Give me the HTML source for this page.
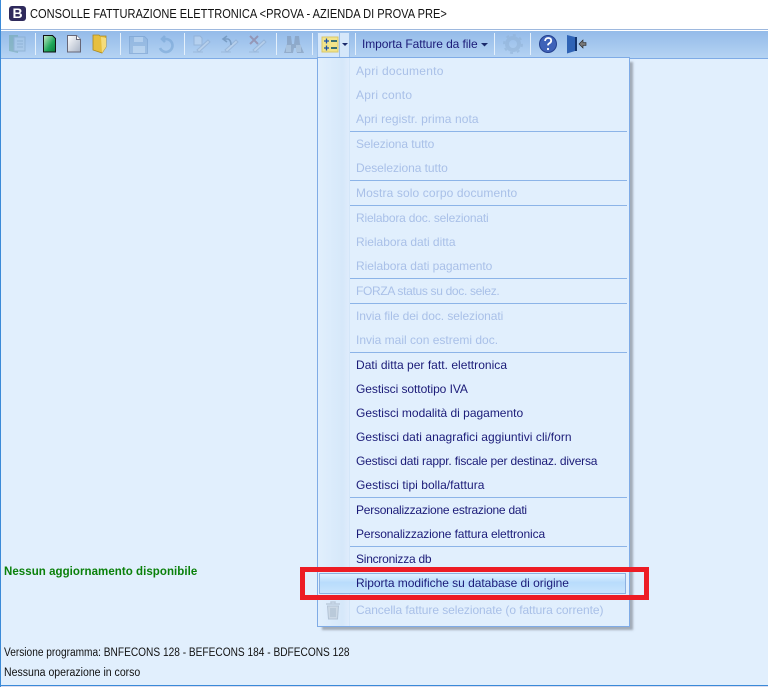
<!DOCTYPE html>
<html><head><meta charset="utf-8"><style>
html,body{margin:0;padding:0;width:768px;height:687px;overflow:hidden;background:#fff}
body{position:relative;font-family:"Liberation Sans",sans-serif;font-size:12px}
div,span{position:absolute;white-space:nowrap}
.t{left:356px;line-height:16px;height:16px;color:#1b1b78}
.d{color:#a9c0e8}
.s{left:350px;width:277px;height:1px;background:#8cb4e8}
.v{top:33px;width:1px;height:22px;background:#e4f0fb}
</style></head><body>
<div style="left:0;top:0;width:1px;height:687px;background:#3a8ad8;z-index:9"></div>
<div style="left:9px;top:6px;width:17px;height:15px;background:#2f2a5c;border-radius:3px;color:#fff;font-weight:bold;font-size:14px;line-height:15px;text-align:center">B</div>
<div style="left:30px;top:6px;line-height:16px;color:#111;font-size:12.5px;transform:scaleX(.885);transform-origin:0 0">CONSOLLE FATTURAZIONE ELETTRONICA &lt;PROVA - AZIENDA DI PROVA PRE&gt;</div>
<div style="left:0;top:29px;width:768px;height:1px;background:#9db8de"></div>
<div style="left:0;top:31px;width:768px;height:27px;background:linear-gradient(#94bbe9,#b5d3f3)"></div>
<div style="left:0;top:58px;width:768px;height:1px;background:#7fabe6"></div>
<div style="left:0;top:59px;width:768px;height:626px;background:#e1effd"></div>
<div style="left:0;top:685px;width:768px;height:1px;background:#3a8ad8"></div>
<div style="left:0;top:686px;width:768px;height:1px;background:#dde"></div>

<div class="v" style="left:35px"></div><div class="v" style="left:120px"></div><div class="v" style="left:184px"></div><div class="v" style="left:276px"></div><div class="v" style="left:312px"></div><div class="v" style="left:355px"></div><div class="v" style="left:494px"></div><div class="v" style="left:530px"></div>

<svg style="position:absolute;left:0;top:28px" width="610" height="32" viewBox="0 28 610 32">
<g opacity=".55">
<path d="M9 35h9v18l-9-2z" fill="#6fa7a8"/><path d="M14 37h11v14H14z" fill="#a9c9e6" stroke="#7fa3c4"/><path d="M17 41h6M17 44h6M17 47h6" stroke="#7fa3c4"/>
</g>
<path d="M43.500 35.500h9l3 3v13.500h-12z" fill="url(#g)" stroke="#111"/>
<path d="M67.500 35.500h9l4 4v12.500h-13z" fill="url(#w)" stroke="#667"/><path d="M76.500 35.500v4h4" fill="#fff" stroke="#667"/>
<path d="M93 35h6l1 1h6v11l-4 6-9-3z" fill="#e7bf3e" stroke="#a98820" stroke-width=".8"/><path d="M101 37l5 1v9l-4 6z" fill="#f5dc7c"/>
<g opacity=".5">
<path d="M129.500 36.500h15l3 3v14h-18z" fill="#8cb0d8" stroke="#6f97c7"/><path d="M134 37h9v5h-9zM133 46h12v7h-12z" fill="#c3d9ef"/>
<path d="M165 36l-3 3 3 3M163 39h3a6.500 6.500 0 1 1-6 9" fill="none" stroke="#6f9fd0" stroke-width="2.600"/>
<path d="M193 52h10M197 50l11-10 2 2-11 10z" fill="#c9d8ea" stroke="#8ba6c8"/>
<path d="M194 36h6l2 2v7h-8z" fill="#c9dcf1" stroke="#8ba6c8"/>
<path d="M221 52h10M225 50l11-10 2 2-11 10z" fill="#c9d8ea" stroke="#8ba6c8"/>
<path d="M227 36l-4 3 4 3M223 39h5q3 1 3 6" fill="none" stroke="#55799f" stroke-width="1.600"/>
<path d="M249 52h10M253 50l11-10 2 2-11 10z" fill="#c9d8ea" stroke="#8ba6c8"/>
<path d="M250 36l8 8M258 36l-8 8" stroke="#8a6a80" stroke-width="2"/>
<path d="M287 36h4l1 8h2l1-8h4l1 8 4 9h-7l-1-5h-2l-1 5h-9l3-9z" fill="#7a8ea8"/><path d="M286 45h5v7h-5zM296 45h5v7h-5z" fill="#a9bccf"/>
<circle cx="513" cy="44" r="6" fill="none" stroke="#8fb0d4" stroke-width="4"/><circle cx="513" cy="44" r="9" fill="none" stroke="#8fb0d4" stroke-width="2" stroke-dasharray="3 4"/>
</g>
<rect x="317.500" y="32.500" width="32" height="26" fill="#d5e7fa" stroke="#9cc0ea"/>
<path d="M339.500 32v26" stroke="#9cc0ea"/>
<rect x="322" y="37" width="16" height="15" fill="#f2e48a" stroke="#d9c76a"/>
<path d="M324 41h5M326.500 38.500v5M324 48h5M326.500 45.500v5" stroke="#1a4fa8" stroke-width="1.300"/><path d="M331 41h6M331 48h6" stroke="#1f5f70" stroke-width="1.800"/>
<path d="M342 43h6l-3 3z" fill="#1b2a6b"/>
<path d="M481 43h7l-3.500 3.500z" fill="#1b2a6b"/>
<circle cx="548" cy="44" r="8.500" fill="#3f62b8" stroke="#24418f"/>
<path d="M545 41q.5-3 3.200-3 3 0 3 2.600 0 1.800-2 2.800-1.200.7-1.200 2" fill="none" stroke="#fff" stroke-width="1.800"/><circle cx="548" cy="49" r="1.100" fill="#fff"/>
<path d="M567 35l8 2v14l-8 2.500z" fill="#2f63b5"/><path d="M575 37h2v14h-2z" fill="#13356f"/>
<path d="M579 44l4-4v2.500h3v3h-3V48z" fill="#777" stroke="#222" stroke-width=".6"/>
<defs>
<linearGradient id="g" x1="0" y1="0" x2="1" y2="1"><stop offset="0" stop-color="#c9ecc9"/><stop offset=".6" stop-color="#1ea65a"/><stop offset="1" stop-color="#0c7a3c"/></linearGradient>
<linearGradient id="w" x1="0" y1="0" x2="1" y2="1"><stop offset="0" stop-color="#fff"/><stop offset="1" stop-color="#a9b4c6"/></linearGradient>
</defs>
</svg>
<div style="left:362px;top:36px;line-height:16px;color:#1b1b78;letter-spacing:-.08px">Importa Fatture da file</div>

<div style="left:317px;top:57px;width:311px;height:568px;background:#e1effd;border:1px solid #7fabe6;box-shadow:4px 4px 2px -1px rgba(110,115,125,.55)"></div>
<div style="left:318px;top:58px;width:31px;height:568px;background:linear-gradient(90deg,#e1effd,#d6e8fa 80%,#dfecfc)"></div>
<div style="left:349px;top:58px;width:1px;height:568px;background:#d4e6f9"></div>

<div class="t d" style="top:63px;letter-spacing:.26px">Apri documento</div>
<div class="t d" style="top:87px;letter-spacing:.22px">Apri conto</div>
<div class="t d" style="top:111px;letter-spacing:.08px">Apri registr. prima nota</div>
<div class="s" style="top:131px"></div>
<div class="t d" style="top:136px;letter-spacing:-.08px">Seleziona tutto</div>
<div class="t d" style="top:160px;letter-spacing:-.06px">Deseleziona tutto</div>
<div class="s" style="top:180px"></div>
<div class="t d" style="top:185px;letter-spacing:.12px">Mostra solo corpo documento</div>
<div class="s" style="top:205px"></div>
<div class="t d" style="top:210px;letter-spacing:-.19px">Rielabora doc. selezionati</div>
<div class="t d" style="top:234px;letter-spacing:-.03px">Rielabora dati ditta</div>
<div class="t d" style="top:258px;letter-spacing:-.05px">Rielabora dati pagamento</div>
<div class="s" style="top:278px"></div>
<div class="t d" style="top:283px;letter-spacing:-.32px">FORZA status su doc. selez.</div>
<div class="s" style="top:303px"></div>
<div class="t d" style="top:308px;letter-spacing:-.07px">Invia file dei doc. selezionati</div>
<div class="t d" style="top:332px">Invia mail con estremi doc.</div>
<div class="s" style="top:352px"></div>
<div class="t" style="top:357px;letter-spacing:.03px">Dati ditta per fatt. elettronica</div>
<div class="t" style="top:381px;letter-spacing:-.06px">Gestisci sottotipo IVA</div>
<div class="t" style="top:405px;letter-spacing:-.01px">Gestisci modalità di pagamento</div>
<div class="t" style="top:429px;letter-spacing:.05px">Gestisci dati anagrafici aggiuntivi cli/forn</div>
<div class="t" style="top:453px;letter-spacing:-.19px">Gestisci dati rappr. fiscale per destinaz. diversa</div>
<div class="t" style="top:477px;letter-spacing:.04px">Gestisci tipi bolla/fattura</div>
<div class="s" style="top:497px"></div>
<div class="t" style="top:502px;letter-spacing:-.24px">Personalizzazione estrazione dati</div>
<div class="t" style="top:526px;letter-spacing:-.12px">Personalizzazione fattura elettronica</div>
<div class="s" style="top:546px"></div>
<div class="t" style="top:551px;letter-spacing:-.24px">Sincronizza db</div>
<div style="left:319px;top:573px;width:305px;height:19px;border:1px solid #8cb0e0;background:linear-gradient(#e0f0ff,#b8dcfc 45%,#c8e4fd)"></div>
<div class="t" style="top:575px;letter-spacing:-.03px">Riporta modifiche su database di origine</div>
<div class="t d" style="top:602px;letter-spacing:-.07px">Cancella fatture selezionate (o fattura corrente)</div>
<svg style="position:absolute;left:325px;top:601px" width="16" height="19" viewBox="0 0 16 19"><path d="M1 3h14M6 3V1h4v2" stroke="#bccbdc" stroke-width="1.500" fill="none"/><path d="M2.500 5h11l-1 13h-9z" fill="#ccd9e6" stroke="#b4c4d6"/><path d="M6 7v9M8 7v9M10 7v9" stroke="#a9bacd"/></svg>
<div style="left:300px;top:567px;width:339px;height:23px;border:5px solid #ed1c24"></div>

<div style="left:4px;top:564px;line-height:16px;color:#0a800a;font-weight:bold;font-size:11.500px;letter-spacing:.05px">Nessun aggiornamento disponibile</div>
<div style="left:4px;top:645px;line-height:16px;color:#111;font-size:11.500px;transform:scaleX(.882);transform-origin:0 0">Versione programma: BNFECONS 128 - BEFECONS 184 - BDFECONS 128</div>
<div style="left:4px;top:665px;line-height:16px;color:#111;font-size:11.500px;transform:scaleX(.915);transform-origin:0 0">Nessuna operazione in corso</div>
</body></html>
